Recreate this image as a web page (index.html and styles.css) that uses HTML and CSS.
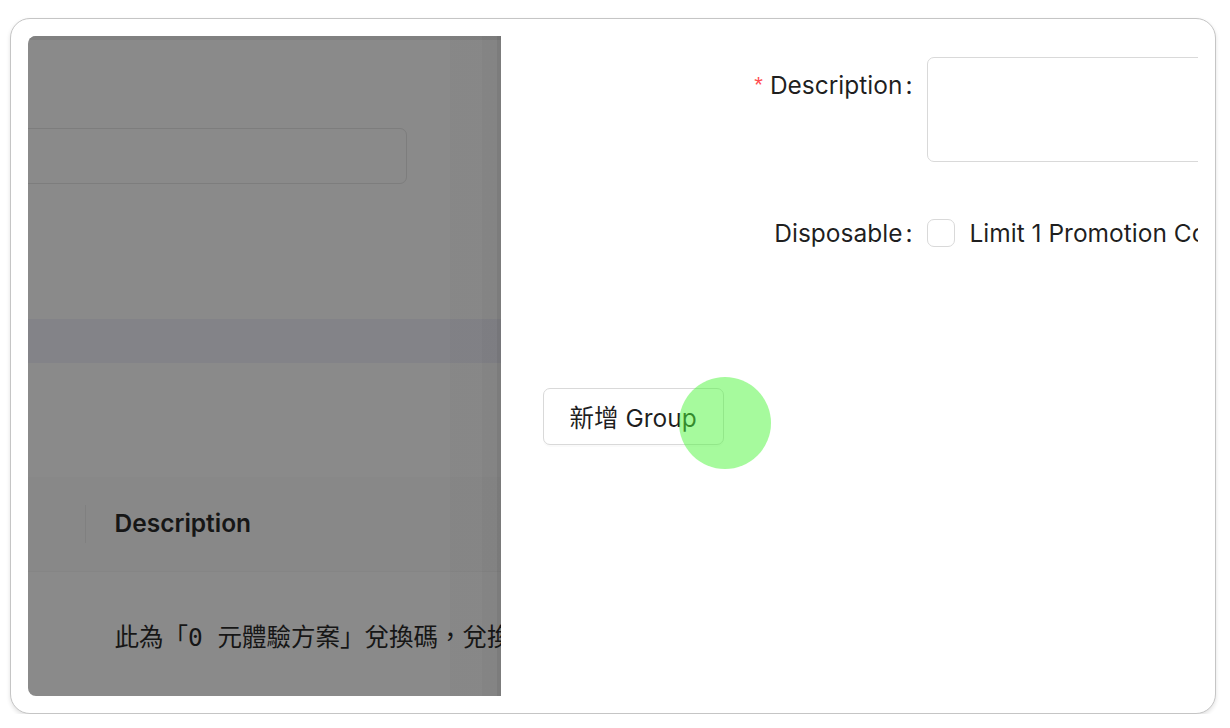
FILE: index.html
```html
<!DOCTYPE html>
<html lang="zh-Hant">
<head>
<meta charset="utf-8">
<title>Promotion Code</title>
<link rel="stylesheet" href="styles.css">
</head>
<body>
  <div class="frame">
    <div class="viewport">
      <section class="page">
        <div class="page-top"></div>
        <div class="search"></div>
        <div class="tabs-band"></div>
        <div class="thead">
          <div class="th-first"></div>
          <div class="col-divider"></div>
          <div class="th-desc">Description</div>
        </div>
        <div class="trow">此為「0 元體驗方案」兌換碼，兌換後可免費體驗</div>
      </section>
      <aside class="drawer">
        <div class="form-item form-item-desc">
          <label class="label"><span class="req">*</span>Description<span class="colon">:</span></label>
          <div class="control">
            <textarea class="textarea"></textarea>
          </div>
        </div>
        <div class="form-item">
          <label class="label">Disposable<span class="colon">:</span></label>
          <div class="control control-check">
            <span class="checkbox"></span>
            <span class="check-text">Limit 1 Promotion Code per Member</span>
          </div>
        </div>
        <button class="btn" type="button">新增 Group<span class="click-dot"></span></button>
      </aside>
    </div>
  </div>
</body>
</html>
```
FILE: styles.css
```css
html, body {
  margin: 0;
  background: #fff;
}

body {
  font-family: Inter, "Noto Sans CJK TC", sans-serif;
  font-size: 24.5px;
  color: rgba(0, 0, 0, 0.88);
}

.frame {
  box-sizing: border-box;
  margin: 18px 0 0 10px;
  width: 1206px;
  height: 696px;
  border: 1.5px solid #c5c5c5;
  border-radius: 20px;
  padding: 16.5px 17.5px 16.5px 16.5px;
  background: #fff;
  box-shadow: 0 2px 4px rgba(0, 0, 0, 0.12);
}

.viewport {
  display: flex;
  height: 660px;
  overflow: hidden;
  border-radius: 8px 0 0 8px;
}

/* masked page on the left */
.page {
  position: relative;
  flex: 0 0 473px;
  display: flex;
  flex-direction: column;
  background: #8a8a8a;
  overflow: hidden;
  color: #161616;
}

.page::after {
  content: "";
  position: absolute;
  top: 0;
  right: 0;
  bottom: 0;
  width: 51px;
  background: linear-gradient(to right,
    rgba(0, 0, 0, 0.02) 0 32px,
    rgba(0, 0, 0, 0.045) 32px 47px,
    rgba(0, 0, 0, 0.1) 47px);
  pointer-events: none;
}

.page-top {
  height: 4px;
  background: #818181;
}

.search {
  box-sizing: border-box;
  margin-top: 88px;
  margin-left: -10px;
  width: 389px;
  height: 56px;
  border: 1px solid #7d7d7d;
  border-radius: 7px;
}

.tabs-band {
  margin-top: 135px;
  height: 44px;
  background: #838388;
}

.thead {
  box-sizing: border-box;
  margin-top: 114px;
  height: 95px;
  display: flex;
  align-items: center;
  background: #888;
  border-bottom: 1px solid #858585;
}

.th-first {
  width: 57px;
}

.col-divider {
  width: 1px;
  height: 38px;
  background: #808080;
}

.th-desc {
  padding-left: 29px;
  font-weight: 600;
  line-height: 38.5px;
  white-space: nowrap;
}

.trow {
  padding: 47px 0 0 87px;
  font-family: "DejaVu Sans Mono", "Noto Sans CJK TC", monospace;
  line-height: 38.5px;
  white-space: nowrap;
}

/* drawer on the right */
.drawer {
  position: relative;
  z-index: 1;
  flex: 0 0 900px;
  box-sizing: border-box;
  display: flex;
  flex-direction: column;
  align-items: flex-start;
  padding: 21px 42px 0;
  background: #fff;
}

.form-item {
  display: flex;
  align-self: stretch;
}

.form-item-desc {
  margin-bottom: 43px;
}

.label {
  flex: 0 0 384px;
  text-align: right;
  line-height: 56px;
  white-space: nowrap;
}

.req {
  color: #ff4d4f;
  font-family: "Liberation Sans", sans-serif;
  font-size: 22px;
  margin-right: 7px;
  vertical-align: 2px;
}

.colon {
  margin: 0 14px 0 3px;
}

.control {
  flex: 1;
  min-width: 0;
}

.textarea {
  display: block;
  box-sizing: border-box;
  width: 100%;
  height: 105px;
  margin: 0;
  border: 1px solid #d9d9d9;
  border-radius: 7px;
  resize: none;
  background: #fff;
}

.control-check {
  display: flex;
  align-items: center;
  height: 56px;
}

.checkbox {
  box-sizing: border-box;
  flex: 0 0 28px;
  width: 28px;
  height: 28px;
  border: 1px solid #d9d9d9;
  border-radius: 7px;
  background: #fff;
}

.check-text {
  margin-left: 15px;
  white-space: nowrap;
}

.btn {
  position: relative;
  box-sizing: border-box;
  margin-top: 127px;
  height: 57px;
  padding: 0 26px;
  border: 1px solid #d9d9d9;
  border-radius: 7px;
  background: #fff;
  font: inherit;
  color: rgba(0, 0, 0, 0.88);
  box-shadow: 0 2px 0 rgba(0, 0, 0, 0.02);
  white-space: nowrap;
}

.click-dot {
  position: absolute;
  left: 135px;
  top: -12px;
  width: 92px;
  height: 92px;
  border-radius: 50%;
  background: rgba(77, 245, 60, 0.5);
}
```
